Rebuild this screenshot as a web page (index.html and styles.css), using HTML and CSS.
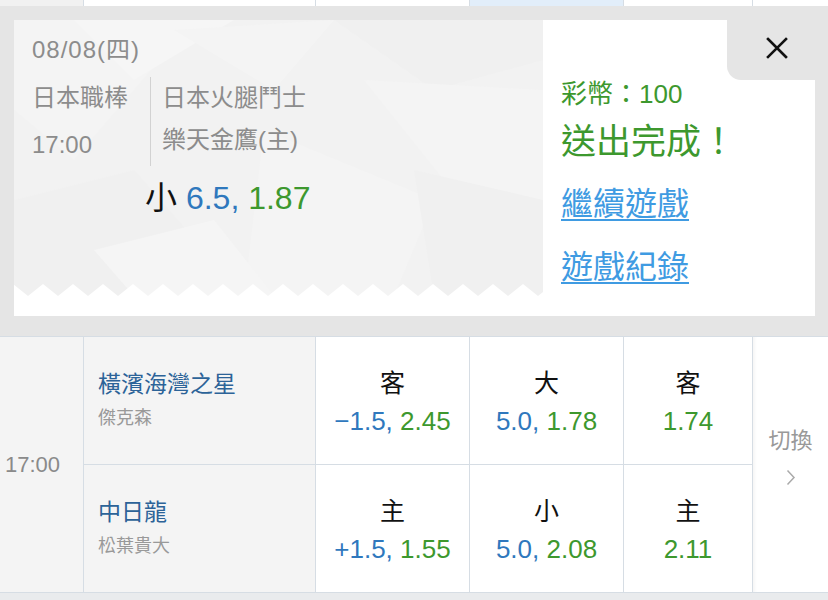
FILE: index.html
```html
<!DOCTYPE html>
<html lang="zh-Hant">
<head>
  <meta charset="UTF-8">
  <meta name="viewport" content="width=device-width, initial-scale=1.0">
  <title>投注完成</title>
  <link rel="stylesheet" href="styles.css">
</head>
<body>
  <div class="strip">
    <div class="strip-cell gray"></div>
    <div class="strip-cell"></div>
    <div class="strip-cell"></div>
    <div class="strip-cell blue"></div>
    <div class="strip-cell"></div>
    <div class="strip-cell last"></div>
  </div>

  <div class="overlay">
    <div class="card">
      <div class="ticket">
        <svg class="ticket-bg" viewBox="0 0 529 276" preserveAspectRatio="none">
          <defs>
            <pattern id="teeth" x="14" y="264" width="30" height="12" patternUnits="userSpaceOnUse">
              <polygon points="0,12 15,0 30,12" fill="#fff"/>
            </pattern>
          </defs>
          <rect width="529" height="276" fill="#f2f2f2"/>
          <polygon points="0,0 180,0 60,140 0,90" fill="#f4f4f4"/>
          <polygon points="60,0 220,0 120,60" fill="#f6f6f6"/>
          <polygon points="160,10 320,0 260,70" fill="#f4f4f4"/>
          <polygon points="320,0 529,0 529,40 420,70" fill="#f0f0f0"/>
          <polygon points="350,60 529,70 529,200 430,160" fill="#f4f4f4"/>
          <polygon points="0,180 120,150 230,276 0,276" fill="#f0f0f0"/>
          <polygon points="250,110 420,180 380,276 230,276" fill="#f4f4f4"/>
          <polygon points="400,150 529,180 529,276 420,276" fill="#f0f0f0"/>
          <polygon points="80,230 200,200 260,276 120,276" fill="#f5f5f5"/>
          <rect x="0" y="264" width="529" height="12" fill="url(#teeth)"/>
        </svg>
        <div class="ticket-body">
          <div class="date">08/08(四)</div>
          <div class="match">
            <div class="league">
              <div>日本職棒</div>
              <div class="kickoff">17:00</div>
            </div>
            <div class="teams">
              <div>日本火腿鬥士</div>
              <div>樂天金鷹(主)</div>
            </div>
          </div>
          <div class="pick">小 <span class="num-blue">6.5,</span> <span class="num-green">1.87</span></div>
        </div>
      </div>

      <div class="result">
        <div class="coins">彩幣：100</div>
        <div class="done">送出完成！</div>
        <a class="link" href="#play">繼續遊戲</a>
        <a class="link" href="#history">遊戲紀錄</a>
      </div>

      <button class="close" aria-label="關閉">
        <svg width="22" height="22" viewBox="0 0 22 22">
          <path d="M2 2 L20 20 M20 2 L2 20" stroke="#111" stroke-width="2.6" stroke-linecap="square"/>
        </svg>
      </button>
    </div>
  </div>

  <div class="games">
    <div class="time">17:00</div>

    <div class="team row1">
      <div class="team-name">橫濱海灣之星</div>
      <div class="pitcher">傑克森</div>
    </div>
    <div class="odds row1">
      <div class="label">客</div>
      <div class="val"><span class="num-blue">−1.5,</span> <span class="num-green">2.45</span></div>
    </div>
    <div class="odds row1">
      <div class="label">大</div>
      <div class="val"><span class="num-blue">5.0,</span> <span class="num-green">1.78</span></div>
    </div>
    <div class="odds row1">
      <div class="label">客</div>
      <div class="val"><span class="num-green">1.74</span></div>
    </div>

    <div class="switch">
      <div>切換</div>
      <svg width="10" height="17" viewBox="0 0 10 17">
        <path d="M1.5 1.5 L8 8.5 L1.5 15.5" fill="none" stroke="#aaa" stroke-width="1.5"/>
      </svg>
    </div>

    <div class="team">
      <div class="team-name">中日龍</div>
      <div class="pitcher">松葉貴大</div>
    </div>
    <div class="odds">
      <div class="label">主</div>
      <div class="val"><span class="num-blue">+1.5,</span> <span class="num-green">1.55</span></div>
    </div>
    <div class="odds">
      <div class="label">小</div>
      <div class="val"><span class="num-blue">5.0,</span> <span class="num-green">2.08</span></div>
    </div>
    <div class="odds">
      <div class="label">主</div>
      <div class="val"><span class="num-green">2.11</span></div>
    </div>
  </div>

  <div class="bottom-strip"></div>
</body>
</html>
```

FILE: styles.css
```css
body {
  margin: 0;
  padding: 0;
  width: 828px;
  font-family: "Liberation Sans", "Noto Sans CJK TC", sans-serif;
  background-color: #fff;
  overflow: hidden;
}
.strip,
.games {
  display: grid;
  grid-template-columns: 84px 232px 154px 154px 129px 75px;
}
.strip {
  height: 6px;
}
.strip-cell {
  border-right: 1px solid #d6dde4;
  background-color: #fff;
}
.strip-cell.gray {
  background-color: #f1f1f1;
}
.strip-cell.blue {
  background-color: #e2eefa;
}
.strip-cell.last {
  border-right: none;
}

/* popup */
.overlay {
  background-color: #e5e5e5;
  padding: 14px 13px 20px 14px;
}
.card {
  position: relative;
  display: flex;
  height: 296px;
  background-color: #fff;
}
.ticket {
  position: relative;
  width: 529px;
  height: 276px;
  flex-shrink: 0;
}
.ticket-bg {
  position: absolute;
  top: 0;
  left: 0;
  width: 100%;
  height: 100%;
}
.ticket-body {
  position: relative;
  padding: 13px 0 0 18px;
  color: #8c8c8c;
  font-size: 24px;
}
.date {
  line-height: 34px;
  letter-spacing: 1px;
}
.match {
  display: flex;
  margin-top: 10px;
}
.league {
  width: 118px;
  line-height: 42px;
}
.league .kickoff {
  margin-top: 5px;
}
.teams {
  border-left: 1px solid #d2d2d2;
  padding-left: 11px;
  line-height: 42px;
}
.pick {
  margin-top: 12px;
  padding-left: 113px;
  font-size: 32px;
  line-height: 40px;
  color: #111;
}
.num-blue {
  color: #2f78bd;
}
.num-green {
  color: #3d982e;
}
.result {
  flex: 1;
  padding: 57px 0 0 18px;
  color: #3d982e;
}
.coins {
  font-size: 26px;
  line-height: 34px;
}
.done {
  margin-top: 9px;
  font-size: 35px;
  line-height: 44px;
}
.link {
  display: block;
  width: max-content;
  margin-top: 18px;
  font-size: 32px;
  line-height: 44px;
  color: #3f9be2;
  text-decoration: underline;
  text-decoration-thickness: 2px;
  text-underline-offset: 4px;
}
.link + .link {
  margin-top: 19px;
}
.close {
  position: absolute;
  top: 0;
  right: 0;
  width: 88px;
  height: 60px;
  display: flex;
  align-items: center;
  justify-content: center;
  padding: 0 0 4px 12px;
  border: none;
  border-bottom-left-radius: 14px;
  background-color: #e5e5e5;
}

/* game table */
.games {
  grid-template-rows: 128px 127px;
  border-top: 1px solid #d6dde4;
  border-bottom: 1px solid #d6dde4;
}
.time {
  grid-row: span 2;
  display: flex;
  align-items: center;
  padding-left: 5px;
  border-right: 1px solid #d6dde4;
  background-color: #f4f4f4;
  color: #8a8a8a;
  font-size: 22px;
}
.team {
  padding: 31px 0 0 14px;
  border-right: 1px solid #d6dde4;
  background-color: #f4f4f4;
}
.team-name {
  font-size: 23px;
  line-height: 32px;
  color: #2c6398;
}
.pitcher {
  margin-top: 5px;
  font-size: 18px;
  line-height: 26px;
  color: #999;
}
.odds {
  padding-top: 29px;
  border-right: 1px solid #d6dde4;
  text-align: center;
}
.row1 {
  border-bottom: 1px solid #d6dde4;
}
.label {
  font-size: 25px;
  line-height: 34px;
  color: #111;
}
.val {
  margin-top: 3px;
  font-size: 26px;
  line-height: 36px;
}
.switch {
  grid-column: 6;
  grid-row: 1 / span 2;
  display: flex;
  flex-direction: column;
  align-items: center;
  justify-content: center;
  gap: 15px;
  padding-bottom: 22px;
  color: #999;
  font-size: 22px;
  box-shadow: inset 5px 0 4px -4px rgba(0, 0, 0, 0.06);
}
.bottom-strip {
  height: 10px;
  background-color: #e9ebed;
}
```
